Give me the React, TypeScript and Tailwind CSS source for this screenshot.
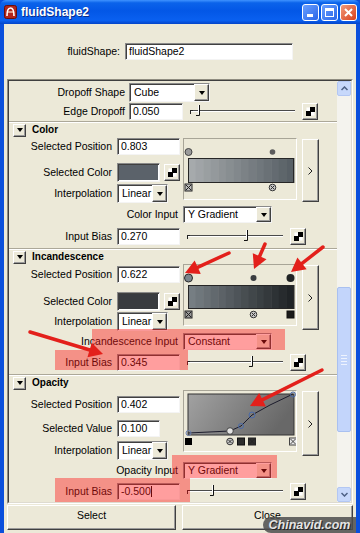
import React from "react";

const F = "font-['Liberation_Sans_Narrow','Liberation_Sans',sans-serif]";
const SUNKEN =
  "bg-white border border-t-[#8a8a8a] border-l-[#8a8a8a] border-b-[#f4f4f4] border-r-[#f4f4f4] shadow-[inset_1px_1px_0_#404040]";
const RAISED =
  "bg-[#ECE9D8] border border-t-white border-l-white border-b-[#404040] border-r-[#404040] shadow-[inset_-1px_-1px_0_#9a9a9a]";

function Checker() {
  return (
    <svg width="9" height="9" viewBox="0 0 9 9" className="block">
      <rect x="0.5" y="0.5" width="8" height="8" fill="#fff" />
      <rect x="4" y="0" width="5" height="5" fill="#000" />
      <rect x="0" y="4" width="5" height="5" fill="#000" />
    </svg>
  );
}

function MapBtn() {
  return (
    <div className={`${RAISED} w-[16px] h-[17px] flex items-center justify-center`}>
      <Checker />
    </div>
  );
}

function Field({ cls, text, cursor }: { cls: string; text: string; cursor?: boolean }) {
  return (
    <div className={`${SUNKEN} ${cls} flex items-center pl-[3px] leading-none`}>
      <span>{text}</span>
      {cursor && <span className="w-[1px] h-[11px] bg-black" />}
    </div>
  );
}

function Dropdown({ cls, text }: { cls: string; text: string }) {
  return (
    <div className={`${SUNKEN} ${cls} flex items-stretch`}>
      <span className="flex-1 pl-[4px] flex items-center leading-none">{text}</span>
      <div className={`${RAISED} w-[15px] flex items-center justify-center`}>
        <div className="w-0 h-0 border-l-[3.5px] border-r-[3.5px] border-t-[4px] border-l-transparent border-r-transparent border-t-black" />
      </div>
    </div>
  );
}

function Slider({ w, t }: { w: number; t: number }) {
  return (
    <svg width={w} height={17} className="block">
      <line x1={3} y1={7.5} x2={w} y2={7.5} stroke="#4a4a4a" />
      <line x1={3} y1={8.5} x2={w} y2={8.5} stroke="#ffffff" />
      <line x1={2.5} y1={7} x2={2.5} y2={11} stroke="#222" />
      <line x1={2} y1={7.5} x2={5} y2={7.5} stroke="#222" />
      <path d={`M${t + 0.5} 2 V12.5 H${t - 3}`} stroke="#111" fill="none" />
      <line x1={t - 0.5} y1={2} x2={t - 0.5} y2={11} stroke="#fff" />
    </svg>
  );
}

function Label({ cls, children }: { cls: string; children: React.ReactNode }) {
  return <div className={`${cls} text-right whitespace-nowrap leading-none`}>{children}</div>;
}

function Separator({ cls }: { cls: string }) {
  return <div className={`${cls} h-0 border-t border-t-[#aca899] border-b border-b-white`} />;
}

function Header({ cls, title }: { cls: string; title: string }) {
  return (
    <div className={`${cls} h-[14px] flex items-center`}>
      <div className={`${RAISED} ml-[4px] w-[13px] h-[13px] flex items-center justify-center`}>
        <div className="w-0 h-0 border-l-[3.5px] border-r-[3.5px] border-t-[4px] border-l-transparent border-r-transparent border-t-black" />
      </div>
      <span className="ml-[6px] font-['Liberation_Sans',sans-serif] font-bold text-[10px] leading-none">
        {title}
      </span>
    </div>
  );
}

function lerp(a: number[], b: number[], t: number) {
  return `rgb(${a.map((v, i) => Math.round(v + (b[i] - v) * t)).join(",")})`;
}

function Bands({ x, y, w, h, from, to }: { x: number; y: number; w: number; h: number; from: number[]; to: number[] }) {
  const n = 14;
  const bw = w / n;
  return (
    <g>
      {Array.from({ length: n }).map((_, i) => (
        <rect key={i} x={x + i * bw} y={y} width={bw + 0.5} height={h} fill={lerp(from, to, i / (n - 1))} />
      ))}
      <rect x={x + 0.5} y={y + 0.5} width={w - 1} height={h - 1} fill="none" stroke="#262626" />
    </g>
  );
}

function XSquare({ x, y, fill = "#bdbdbd" }: { x: number; y: number; fill?: string }) {
  return (
    <g>
      <rect x={x - 3.5} y={y - 3.5} width={7} height={7} fill={fill} stroke="#222" />
      <path d={`M${x - 2.5} ${y - 2.5} L${x + 2.5} ${y + 2.5} M${x + 2.5} ${y - 2.5} L${x - 2.5} ${y + 2.5}`} stroke="#222" />
    </g>
  );
}

function XCircle({ x, y }: { x: number; y: number }) {
  return (
    <g>
      <circle cx={x} cy={y} r={3.3} fill="#c8c8c8" stroke="#333" />
      <path d={`M${x - 1.6} ${y - 1.6} L${x + 1.6} ${y + 1.6} M${x + 1.6} ${y - 1.6} L${x - 1.6} ${y + 1.6}`} stroke="#333" />
    </g>
  );
}

const BOX = "w-[114px] h-[62px] border border-t-[#a8a597] border-l-[#a8a597] border-b-white border-r-white";

function ColorRamp() {
  return (
    <div className={BOX}>
      <svg width="112" height="60" className="block">
        <circle cx={4.5} cy={13} r={3.5} fill="#9a9a9a" stroke="#444" />
        <circle cx={88.5} cy={13} r={2.8} fill="#5c5c5c" />
        <Bands x={4} y={19} w={106} h={25} from={[166, 170, 172]} to={[88, 96, 102]} />
        <XSquare x={4.5} y={48.5} />
        <XCircle x={88.5} y={48.5} />
      </svg>
    </div>
  );
}

function IncRamp() {
  return (
    <div className={BOX}>
      <svg width="112" height="60" className="block">
        <circle cx={4.5} cy={13} r={4} fill="#7c868c" stroke="#2a2a2a" />
        <circle cx={69.5} cy={13} r={3} fill="#3a3d40" />
        <circle cx={106.5} cy={13} r={4} fill="#1f2224" />
        <Bands x={4} y={20} w={106} h={24} from={[118, 126, 131]} to={[32, 36, 39]} />
        <XSquare x={4.5} y={49.5} fill="#9a9a9a" />
        <XCircle x={69.5} y={49.5} />
        <rect x={103} y={46} width={7} height={7} fill="#1a1a1a" stroke="#111" />
      </svg>
    </div>
  );
}

function OpacityCurve() {
  const pts = "4,42 46,40 57,35 68,24 86,14 109,3";
  return (
    <div className={BOX}>
      <svg width="112" height="60" className="block">
        <defs>
          <linearGradient id="og" x1="0" y1="0" x2="1" y2="0.3">
            <stop offset="0" stopColor="#a2a2a2" />
            <stop offset="1" stopColor="#686868" />
          </linearGradient>
        </defs>
        <rect x={4} y={3} width={106} height={41} fill="url(#og)" stroke="#333" />
        <polyline points={pts} fill="none" stroke="#1c1c2c" strokeWidth={1} />
        <circle cx={4.5} cy={42} r={2.5} fill="none" stroke="#6a80b0" />
        <circle cx={46} cy={40} r={3.3} fill="#e4e4e4" stroke="#444" />
        <circle cx={57} cy={35} r={2.5} fill="none" stroke="#4a6aa8" />
        <circle cx={68} cy={24} r={3} fill="none" stroke="#4a6aa8" />
        <circle cx={109} cy={3.5} r={2.5} fill="none" stroke="#4a6aa8" />
        <rect x={1} y={47} width={7} height={7} fill="#000" />
        <XCircle x={46} y={50.5} />
        <rect x={53.5} y={47} width={7} height={7} fill="#2c2c2c" stroke="#111" />
        <XSquare x={68} y={50.5} fill="#2c2c2c" />
        <g>
          <rect x={105.5} y={47} width={7} height={7} fill="#e8e8e8" stroke="#444" />
          <path d="M106.5 48 L111.5 53 M111.5 48 L106.5 53" stroke="#444" />
        </g>
      </svg>
    </div>
  );
}

function SideBtn({ cls }: { cls: string }) {
  return (
    <div className={`${RAISED} ${cls} w-[17px] flex items-center justify-center`}>
      <svg width="5" height="8" viewBox="0 0 5 8" className="block">
        <path d="M0.5 0.5 L4 4 L0.5 7.5" stroke="#222" fill="none" />
      </svg>
    </div>
  );
}

function Swatch({ color }: { color: string }) {
  return (
    <div className={`${SUNKEN} w-[43px] h-[19px] p-[1px]`}>
      <div className={`w-full h-full ${color}`} />
    </div>
  );
}

function Arrow({ x1, y1, x2, y2 }: { x1: number; y1: number; x2: number; y2: number }) {
  const dx = x2 - x1;
  const dy = y2 - y1;
  const L = Math.hypot(dx, dy);
  const ux = dx / L;
  const uy = dy / L;
  const hl = 14;
  const hw = 7.5;
  const bx = x2 - ux * hl;
  const by = y2 - uy * hl;
  const px = -uy;
  const py = ux;
  return (
    <g>
      <line x1={x1} y1={y1} x2={bx + ux * 2} y2={by + uy * 2} stroke="#e3201b" strokeWidth={3.5} strokeLinecap="round" />
      <polygon
        points={`${x2},${y2} ${bx + px * hw},${by + py * hw} ${bx - px * hw},${by - py * hw}`}
        fill="#e3201b"
      />
    </g>
  );
}

function ScrollBar() {
  return (
    <div className="w-[14px] flex flex-col bg-[#f4f3ee]">
      <div className="h-[15px] rounded-[2px] bg-[#c7d8fb] border border-[#b3c7f3] flex items-center justify-center">
        <svg width="7" height="5" viewBox="0 0 7 5" className="block">
          <path d="M0.5 4 L3.5 1 L6.5 4" stroke="#4d6185" strokeWidth="1.5" fill="none" />
        </svg>
      </div>
      <div className="flex-1 flex flex-col">
        <div className="h-[191px]" />
        <div className="h-[145px] rounded-[2px] bg-[#c3d5fb] border border-[#a9c0f0] flex flex-col items-center justify-center gap-[2px]">
          <div className="w-[6px] h-[1px] bg-[#eef3fe]" />
          <div className="w-[6px] h-[1px] bg-[#eef3fe]" />
          <div className="w-[6px] h-[1px] bg-[#eef3fe]" />
          <div className="w-[6px] h-[1px] bg-[#eef3fe]" />
        </div>
      </div>
      <div className="h-[15px] rounded-[2px] bg-[#c7d8fb] border border-[#b3c7f3] flex items-center justify-center">
        <svg width="7" height="5" viewBox="0 0 7 5" className="block">
          <path d="M0.5 1 L3.5 4 L6.5 1" stroke="#4d6185" strokeWidth="1.5" fill="none" />
        </svg>
      </div>
    </div>
  );
}

function TitleBar() {
  return (
    <div className="h-[24px] flex items-center bg-[linear-gradient(to_bottom,#3f93ff_0%,#0b63ea_12%,#0357e6_45%,#0a60f0_85%,#0344c8_100%)] rounded-t-[6px]">
      <div className="ml-[4px] w-[13px] h-[14px]">
        <svg width="13" height="14" viewBox="0 0 13 14" className="block">
          <rect x="0.5" y="0.5" width="12" height="13" rx="2" fill="#b2261d" stroke="#6a0f0a" />
          <path d="M3 11 C3 6 4 3 6.5 3 C9 3 10 6 10 11" stroke="#fff" strokeWidth="1.6" fill="none" />
          <path d="M4 7 H9" stroke="#fde2c8" strokeWidth="1.2" />
        </svg>
      </div>
      <span className="ml-[4px] text-white font-bold text-[12px] font-['Liberation_Sans',sans-serif] [text-shadow:1px_1px_0_#0a2c8a] leading-none">
        fluidShape2
      </span>
      <div className="ml-auto mr-[3px] flex gap-[2px]">
        <div className="w-[17px] h-[17px] rounded-[3px] border border-white bg-[linear-gradient(135deg,#6aa0ff,#2a66e8)] flex items-end justify-start pl-[4px] pb-[3px]">
          <div className="w-[6px] h-[3px] bg-white" />
        </div>
        <div className="w-[17px] h-[17px] rounded-[3px] border border-white bg-[linear-gradient(135deg,#6aa0ff,#2a66e8)] flex items-center justify-center">
          <div className="w-[9px] h-[9px] border border-white border-t-[3px]" />
        </div>
        <div className="w-[17px] h-[17px] rounded-[3px] border border-white bg-[linear-gradient(135deg,#f29a7a,#d8401c)] flex items-center justify-center">
          <svg width="9" height="9" viewBox="0 0 9 9" className="block">
            <path d="M1 1 L8 8 M8 1 L1 8" stroke="#fff" strokeWidth="2" />
          </svg>
        </div>
      </div>
    </div>
  );
}

export default function App() {
  return (
    <div className={`${F} text-[10.5px] text-black w-[360px] h-[533px] overflow-hidden relative bg-[#0a4fdc]`}>
      <TitleBar />
      <div className="mx-[4px] bg-[#ECE9D8] h-[509px] flex flex-col">
        {/* top */}
        <div className="h-[55px] pt-[19px]">
          <div className="flex items-center h-[17px]">
            <Label cls="w-[116px]">fluidShape:</Label>
            <div className="ml-[5px]">
              <Field cls="w-[168px] h-[17px]" text="fluidShape2" />
            </div>
          </div>
        </div>

        {/* panel */}
        <div className="mx-[3px] h-[425px] border border-t-[#8f8c80] border-l-[#8f8c80] border-b-white border-r-white">
          <div className="w-full h-full border border-t-[#3f3f3f] border-l-[#3f3f3f] border-b-[#dedbd0] border-r-[#dedbd0] flex overflow-hidden">
            <div className="w-[328px] flex flex-col">
              {/* dropoff */}
              <div className="flex items-center h-[19px] mt-[2px]">
                <Label cls="w-[116px]">Dropoff Shape</Label>
                <div className="ml-[4px]">
                  <Dropdown cls="w-[81px] h-[19px]" text="Cube" />
                </div>
              </div>
              <div className="flex items-center h-[17px] mt-[1px]">
                <Label cls="w-[116px]">Edge Dropoff</Label>
                <div className="ml-[4px]">
                  <Field cls="w-[54px] h-[17px]" text="0.050" />
                </div>
                <div className="ml-[5px]">
                  <Slider w={107} t={11} />
                </div>
                <div className="ml-[7px]">
                  <MapBtn />
                </div>
              </div>

              {/* Color */}
              <Separator cls="mt-[1px]" />
              <Header cls="" title="Color" />
              <div className="flex mt-[1px]">
                <div className="w-[171px] flex flex-col">
                  <div className="flex items-center h-[17px]">
                    <Label cls="w-[103px]">Selected Position</Label>
                    <div className="ml-[5px]">
                      <Field cls="w-[63px] h-[17px]" text="0.803" />
                    </div>
                  </div>
                  <div className="flex items-center h-[19px] mt-[8px]">
                    <Label cls="w-[103px]">Selected Color</Label>
                    <div className="ml-[5px]">
                      <Swatch color="bg-[#5b626a]" />
                    </div>
                    <div className="ml-[4px]">
                      <MapBtn />
                    </div>
                  </div>
                  <div className="flex items-center h-[19px] mt-[2px]">
                    <Label cls="w-[103px]">Interpolation</Label>
                    <div className="ml-[5px]">
                      <Dropdown cls="w-[51px] h-[19px]" text="Linear" />
                    </div>
                  </div>
                </div>
                <div className="ml-[3px]">
                  <ColorRamp />
                </div>
                <div className="ml-[5px] mt-[1px]">
                  <SideBtn cls="h-[63px]" />
                </div>
              </div>
              <div className="flex items-center h-[17px] mt-[3px]">
                <Label cls="w-[169px]">Color Input</Label>
                <div className="ml-[5px]">
                  <Dropdown cls="w-[89px] h-[17px]" text="Y Gradient" />
                </div>
              </div>
              <div className="flex items-center h-[17px] mt-[5px]">
                <Label cls="w-[103px]">Input Bias</Label>
                <div className="ml-[5px]">
                  <Field cls="w-[63px] h-[17px]" text="0.270" />
                </div>
                <div className="ml-[5px]">
                  <Slider w={98} t={62} />
                </div>
                <div className="ml-[7px]">
                  <MapBtn />
                </div>
              </div>

              {/* Incandescence */}
              <Separator cls="mt-[3px]" />
              <Header cls="" title="Incandescence" />
              <div className="flex">
                <div className="w-[171px] flex flex-col">
                  <div className="flex items-center h-[17px] mt-[2px]">
                    <Label cls="w-[103px]">Selected Position</Label>
                    <div className="ml-[5px]">
                      <Field cls="w-[63px] h-[17px]" text="0.622" />
                    </div>
                  </div>
                  <div className="flex items-center h-[19px] mt-[9px]">
                    <Label cls="w-[103px]">Selected Color</Label>
                    <div className="ml-[5px]">
                      <Swatch color="bg-[#383b40]" />
                    </div>
                    <div className="ml-[4px]">
                      <MapBtn />
                    </div>
                  </div>
                  <div className="flex items-center h-[19px] mt-[1px]">
                    <Label cls="w-[103px]">Interpolation</Label>
                    <div className="ml-[5px]">
                      <Dropdown cls="w-[51px] h-[19px]" text="Linear" />
                    </div>
                  </div>
                </div>
                <div className="ml-[3px]">
                  <IncRamp />
                </div>
                <div className="ml-[5px] mt-[1px]">
                  <SideBtn cls="h-[65px]" />
                </div>
              </div>
              <div className="flex items-center h-[17px] mt-[2px]">
                <Label cls="w-[169px]">Incandescence Input</Label>
                <div className="ml-[5px]">
                  <Dropdown cls="w-[89px] h-[17px]" text="Constant" />
                </div>
              </div>
              <div className="flex items-center h-[17px] mt-[4px]">
                <Label cls="w-[103px]">Input Bias</Label>
                <div className="ml-[5px]">
                  <Field cls="w-[63px] h-[17px]" text="0.345" />
                </div>
                <div className="ml-[5px]">
                  <Slider w={98} t={67} />
                </div>
                <div className="ml-[7px]">
                  <MapBtn />
                </div>
              </div>

              {/* Opacity */}
              <Separator cls="mt-[3px]" />
              <Header cls="" title="Opacity" />
              <div className="flex">
                <div className="w-[171px] flex flex-col">
                  <div className="flex items-center h-[17px] mt-[6px]">
                    <Label cls="w-[103px]">Selected Position</Label>
                    <div className="ml-[5px]">
                      <Field cls="w-[63px] h-[17px]" text="0.402" />
                    </div>
                  </div>
                  <div className="flex items-center h-[17px] mt-[7px]">
                    <Label cls="w-[103px]">Selected Value</Label>
                    <div className="ml-[5px]">
                      <Field cls="w-[43px] h-[17px]" text="0.100" />
                    </div>
                  </div>
                  <div className="flex items-center h-[19px] mt-[4px]">
                    <Label cls="w-[103px]">Interpolation</Label>
                    <div className="ml-[5px]">
                      <Dropdown cls="w-[51px] h-[19px]" text="Linear" />
                    </div>
                  </div>
                </div>
                <div className="ml-[3px]">
                  <OpacityCurve />
                </div>
                <div className="ml-[5px] mt-[1px]">
                  <SideBtn cls="h-[65px]" />
                </div>
              </div>
              <div className="flex items-center h-[17px] mt-[2px]">
                <Label cls="w-[169px]">Opacity Input</Label>
                <div className="ml-[5px]">
                  <Dropdown cls="w-[89px] h-[17px]" text="Y Gradient" />
                </div>
              </div>
              <div className="flex items-center h-[17px] mt-[4px]">
                <Label cls="w-[103px]">Input Bias</Label>
                <div className="ml-[5px]">
                  <Field cls="w-[63px] h-[17px]" text="-0.500" cursor />
                </div>
                <div className="ml-[5px]">
                  <Slider w={98} t={28} />
                </div>
                <div className="ml-[7px]">
                  <MapBtn />
                </div>
              </div>
            </div>
            <ScrollBar />
          </div>
        </div>

        {/* bottom buttons */}
        <div className="mt-[1px] mx-[3px] flex gap-[6px] h-[25px]">
          <div className={`${RAISED} w-[169px] flex items-center justify-center pb-[3px]`}>Select</div>
          <div className={`${RAISED} flex-1 flex items-center justify-center pb-[3px]`}>Close</div>
        </div>
      </div>

      {/* red highlight overlays */}
      <div className="absolute left-[92px] top-[329px] w-[193px] h-[21px] bg-[rgba(255,25,25,0.42)]" />
      <div className="absolute left-[55px] top-[350px] w-[133px] h-[20px] bg-[rgba(255,25,25,0.42)]" />
      <div className="absolute left-[172px] top-[455px] w-[105px] h-[23px] bg-[rgba(255,25,25,0.42)]" />
      <div className="absolute left-[55px] top-[478px] w-[135px] h-[24px] bg-[rgba(255,25,25,0.42)]" />

      {/* arrows */}
      <svg width="360" height="533" className="absolute left-0 top-0 pointer-events-none">
        <Arrow x1={229} y1={253} x2={185} y2={273} />
        <Arrow x1={265} y1={244} x2={254} y2={269} />
        <Arrow x1={323} y1={247} x2={291} y2={272} />
        <Arrow x1={30} y1={332} x2={103} y2={354} />
        <Arrow x1={322} y1={370} x2={250} y2={406} />
      </svg>

      {/* watermark */}
      <div className="absolute left-[263px] top-[517px] w-[93px] h-[16px] rounded-l-[8px] bg-[rgba(78,78,78,0.85)] flex items-center justify-center">
        <span className="font-['Liberation_Sans',sans-serif] italic font-bold text-[12.5px] text-[#e4e4e4] [text-shadow:1px_1px_0_#222] leading-none">
          Chinavid.com
        </span>
      </div>
    </div>
  );
}
